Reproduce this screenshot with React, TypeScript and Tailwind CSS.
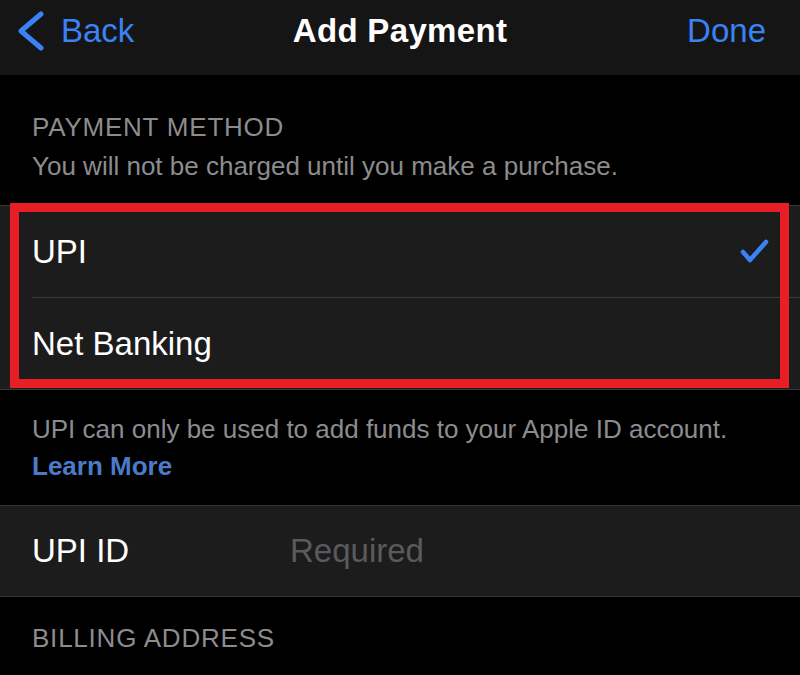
import React from "react";

const font = { fontFamily: '"Liberation Sans", Arial, sans-serif' };

function NavBar() {
  return (
    <div className="relative h-[75px] bg-[#151515] flex items-start pt-[11px]">
      <div className="flex items-center pl-[16px] gap-[15px] text-[#3b82f6]">
        <svg width="30" height="40" viewBox="0 0 30 40" className="-mt-[1px]">
          <polyline
            points="25,3 5,20 25,37"
            fill="none"
            stroke="#3b82f6"
            strokeWidth="5"
            strokeLinecap="round"
            strokeLinejoin="round"
          />
        </svg>
        <span className="text-[33px] leading-[40px]">Back</span>
      </div>
      <div className="absolute left-0 right-0 top-[11px] text-center text-white font-bold text-[33px] leading-[40px] tracking-[0.01em]">
        Add Payment
      </div>
      <div className="ml-auto pr-[34px] text-[#3b82f6] text-[33px] leading-[40px]">Done</div>
    </div>
  );
}

function SectionHeader({ children, className = "" }: { children: React.ReactNode; className?: string }) {
  return (
    <div className={`px-[32px] text-[26px] leading-[30px] tracking-[0.03em] text-[#8c8c8e] ${className}`}>
      {children}
    </div>
  );
}

export default function App() {
  return (
    <div className="relative w-[800px] h-[675px] bg-black overflow-hidden" style={font}>
      <NavBar />

      <SectionHeader className="mt-[37px]">PAYMENT METHOD</SectionHeader>
      <div className="mt-[9px] px-[32px] text-[26px] leading-[30px] text-[#8c8c8e]">
        You will not be charged until you make a purchase.
      </div>

      {/* payment options */}
      <div className="mt-[24px] bg-[#1c1c1d] border-y border-[#353537]">
        <div className="h-[92px] pl-[32px]">
          <div className="h-full flex items-center border-b border-[#3a3a3c] pr-[30px]">
            <span className="text-white text-[33px] leading-[40px]">UPI</span>
            <svg width="30" height="26" viewBox="0 0 30 26" className="ml-auto">
              <polyline
                points="3,13 10,21 26,3"
                fill="none"
                stroke="#3b82f6"
                strokeWidth="4.5"
                strokeLinecap="round"
                strokeLinejoin="round"
              />
            </svg>
          </div>
        </div>
        <div className="h-[91px] pl-[32px] flex items-center">
          <span className="text-white text-[33px] leading-[40px]">Net Banking</span>
        </div>
      </div>

      <div className="mt-[24px] px-[32px] text-[26px] leading-[30px] text-[#8c8c8e]">
        UPI can only be used to add funds to your Apple ID account.
      </div>
      <div className="mt-[7px] px-[32px] text-[26px] leading-[30px] font-bold text-[#4b7bc8]">
        Learn More
      </div>

      <div className="mt-[24px] bg-[#1c1c1d] border-y border-[#353537]">
        <div className="h-[90px] pl-[32px] flex items-center">
          <span className="w-[258px] text-white text-[33px] leading-[40px]">UPI ID</span>
          <span className="text-[#5a5a5c] text-[33px] leading-[40px]">Required</span>
        </div>
      </div>

      <SectionHeader className="mt-[26px]">BILLING ADDRESS</SectionHeader>

      {/* red annotation box */}
      <div className="absolute left-[10px] top-[203px] w-[779px] h-[185px] border-[9px] border-[#e81e27]" />
    </div>
  );
}
